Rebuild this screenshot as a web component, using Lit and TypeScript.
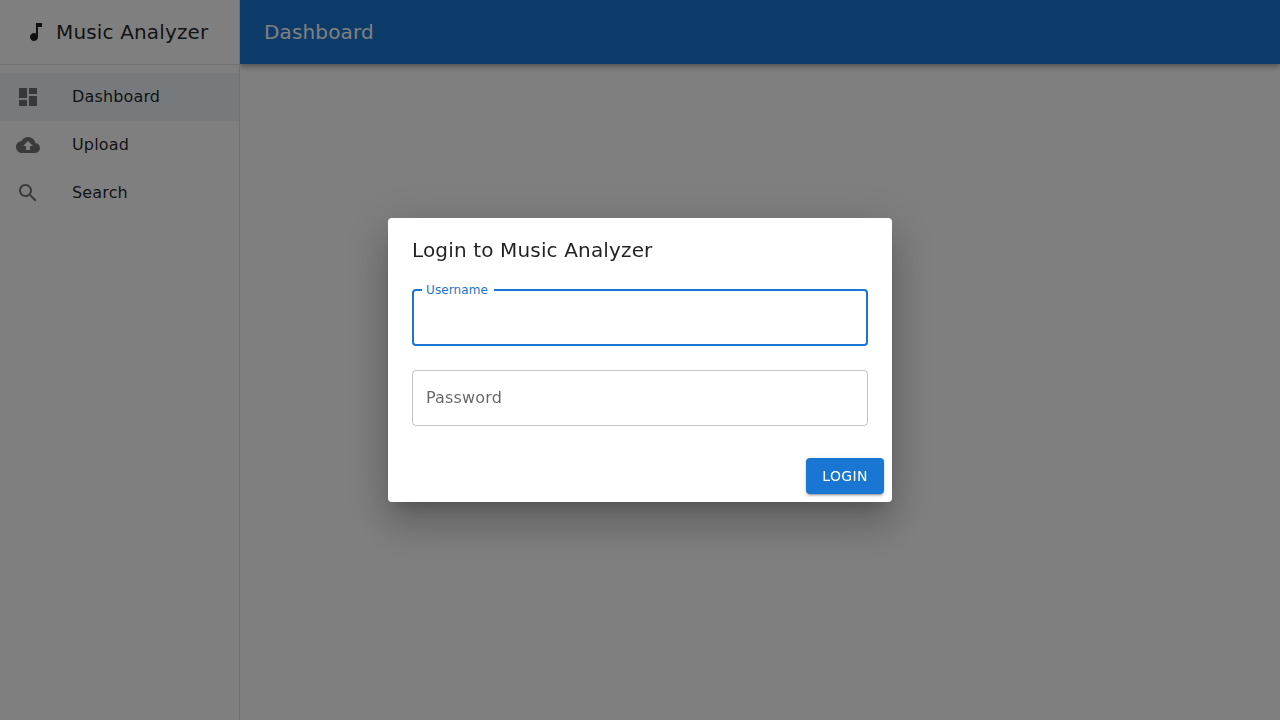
import { LitElement, html, css, svg } from "lit";
import { customElement } from "lit/decorators.js";

const icons = {
  note: "M12 3v10.55c-.59-.34-1.27-.55-2-.55-2.21 0-4 1.79-4 4s1.79 4 4 4 4-1.79 4-4V7h4V3h-6z",
  dashboard: "M3 13h8V3H3v10zm0 8h8v-6H3v6zm10 0h8V11h-8v10zm0-18v6h8V3h-8z",
  upload: "M19.35 10.04C18.67 6.59 15.64 4 12 4 9.11 4 6.6 5.64 5.35 8.04 2.34 8.36 0 10.91 0 14c0 3.31 2.69 6 6 6h13c2.76 0 5-2.24 5-5 0-2.64-2.05-4.78-4.65-4.96zM14 13v4h-4v-4H7l5-5 5 5h-3z",
  search: "M15.5 14h-.79l-.28-.27C15.41 12.59 16 11.11 16 9.5 16 5.91 13.09 3 9.5 3S3 5.91 3 9.5 5.91 16 9.5 16c1.61 0 3.09-.59 4.23-1.57l.27.28v.79l5 4.99L20.49 19l-4.99-5zm-6 0C7.01 14 5 11.99 5 9.5S7.01 5 9.5 5 14 7.01 14 9.5 11.99 14 9.5 14z",
};
const icon = (d: string) => html`<svg class="icon" viewBox="0 0 24 24">${svg`<path d=${d}></path>`}</svg>`;

@customElement("app-root")
export class AppRoot extends LitElement {
  static styles = css`
    :host {
      display: block;
      height: 100vh;
      position: relative;
      overflow: hidden;
      font-family: "DejaVu Sans", sans-serif;
      font-size: 16px;
      line-height: 24px;
      letter-spacing: 0.15008px;
      color: rgba(0, 0, 0, 0.87);
      background: #fff;
      -webkit-font-smoothing: antialiased;
    }
    * { box-sizing: border-box; }
    .icon { width: 24px; height: 24px; fill: currentColor; display: block; flex: none; }
    .page { display: flex; height: 100%; }
    .drawer {
      position: relative;
      z-index: 1;
      width: 240px;
      background: #fff;
      border-right: 1px solid rgba(0, 0, 0, 0.12);
    }
    .brand {
      height: 65px;
      display: flex;
      align-items: center;
      gap: 8px;
      padding: 0 24px;
      border-bottom: 1px solid rgba(0, 0, 0, 0.12);
    }
    .title { margin: 0; font-size: 20px; line-height: 32px; font-weight: 400; white-space: nowrap; }
    .nav { margin: 0; padding: 8px 0; list-style: none; }
    .item { display: flex; align-items: center; gap: 32px; height: 48px; padding: 0 16px; }
    .item .icon { color: rgba(0, 0, 0, 0.54); }
    .selected { background: rgba(25, 118, 210, 0.08); }
    .main { flex: 1; }
    .bar {
      height: 64px;
      display: flex;
      align-items: center;
      padding: 0 24px;
      color: #fff;
      background: #1976d2;
      box-shadow: 0 2px 4px -1px rgba(0, 0, 0, 0.2), 0 4px 5px 0 rgba(0, 0, 0, 0.14), 0 1px 10px 0 rgba(0, 0, 0, 0.12);
    }
    .backdrop {
      position: absolute;
      inset: 0;
      z-index: 2;
      display: flex;
      align-items: center;
      justify-content: center;
      background: rgba(0, 0, 0, 0.5);
      will-change: opacity;
    }
    .dialog {
      width: 504px;
      border-radius: 4px;
      background: #fff;
      box-shadow: 0 11px 15px -7px rgba(0, 0, 0, 0.2), 0 24px 38px 3px rgba(0, 0, 0, 0.14), 0 9px 46px 8px rgba(0, 0, 0, 0.12);
    }
    .heading { padding: 16px 24px; }
    .content { display: flex; flex-direction: column; gap: 24px; padding: 7px 24px 24px; }
    .field { position: relative; height: 56px; }
    .field.focused { height: 57px; }
    .input {
      display: block;
      width: 100%;
      height: 100%;
      padding: 0 14px;
      border: 1px solid rgba(0, 0, 0, 0.23);
      border-radius: 4px;
      background: transparent;
      outline: none;
      font: inherit;
    }
    .focused .input { border: 2px solid #1976d2; }
    .label {
      position: absolute;
      left: 14px;
      top: 16px;
      color: rgba(0, 0, 0, 0.6);
      line-height: 23px;
    }
    .focused .label {
      left: 10px;
      top: -8px;
      padding: 0 8px 0 5.333px;
      background: #fff;
      color: #1976d2;
      transform: scale(0.75);
      transform-origin: top left;
    }
    .actions { display: flex; justify-content: flex-end; padding: 8px; }
    .button {
      height: 36px;
      border: 0;
      border-radius: 4px;
      padding: 6px 16px;
      color: #fff;
      background: #1976d2;
      font: 500 14px/24px "DejaVu Sans", sans-serif;
      letter-spacing: 0.4px;
      box-shadow: 0 3px 1px -2px rgba(0, 0, 0, 0.2), 0 2px 2px 0 rgba(0, 0, 0, 0.14), 0 1px 5px 0 rgba(0, 0, 0, 0.12);
    }
  `;

  render() {
    return html`
      <div class="page">
        <aside class="drawer">
          <div class="brand">${icon(icons.note)}<h1 class="title">Music Analyzer</h1></div>
          <ul class="nav">
            <li class="item selected">${icon(icons.dashboard)}<span>Dashboard</span></li>
            <li class="item">${icon(icons.upload)}<span>Upload</span></li>
            <li class="item">${icon(icons.search)}<span>Search</span></li>
          </ul>
        </aside>
        <main class="main"><header class="bar"><h2 class="title">Dashboard</h2></header></main>
      </div>
      <div class="backdrop">
        <form class="dialog">
          <h2 class="title heading">Login to Music Analyzer</h2>
          <div class="content">
            <div class="field focused"><input id="username" class="input" /><label class="label" for="username">Username</label></div>
            <div class="field"><input id="password" type="password" class="input" /><label class="label" for="password">Password</label></div>
          </div>
          <div class="actions"><button class="button" type="button">LOGIN</button></div>
        </form>
      </div>
    `;
  }
}
